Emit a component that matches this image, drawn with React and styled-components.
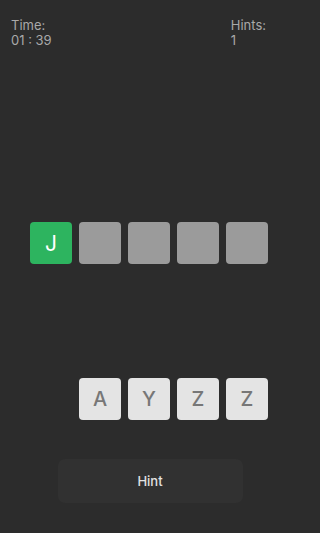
import React from "react";
import styled, { createGlobalStyle } from "styled-components";

const GlobalStyle = createGlobalStyle`
  html, body {
    margin: 0;
    padding: 0;
    background: #2c2c2c;
  }
  body {
    font-family: "Inter", "Liberation Sans", sans-serif;
  }
`;

const Screen = styled.div`
  width: 300px;
  height: 533px;
  background: #2c2c2c;
  display: flex;
  flex-direction: column;
  align-items: center;
  overflow: hidden;
`;

const Header = styled.div`
  align-self: stretch;
  display: flex;
  justify-content: space-between;
  padding: 18px 34px 0 11px;
`;

const Stat = styled.div`
  font-size: 13px;
  line-height: 15px;
  color: #a9a9a9;
`;

const TileRow = styled.div`
  width: 238px;
  display: flex;
  gap: 7px;
  justify-content: ${(p) => (p.$end ? "flex-end" : "flex-start")};
  margin-top: ${(p) => p.$top}px;
  margin-left: -2px;
`;

const Slot = styled.div`
  width: 42px;
  height: 42px;
  border-radius: 4px;
  background: ${(p) => (p.$filled ? "#2db45f" : "#9b9b9b")};
  color: #ffffff;
  display: flex;
  align-items: center;
  justify-content: center;
  font-size: 21px;
`;

const Key = styled.div`
  width: 42px;
  height: 42px;
  border-radius: 4px;
  background: #e4e4e4;
  color: #777777;
  display: flex;
  align-items: center;
  justify-content: center;
  font-size: 20px;
  font-weight: 500;
`;

const HintButton = styled.div`
  width: 185px;
  height: 44px;
  margin-top: 39px;
  border-radius: 7px;
  background: #313131;
  color: #e2e2e2;
  display: flex;
  align-items: center;
  justify-content: center;
  font-size: 13px;
  font-weight: 500;
`;

const slots = ["J", "", "", "", ""];
const keys = ["A", "Y", "Z", "Z"];

export default function App() {
  return (
    <Screen>
      <GlobalStyle />
      <Header>
        <Stat>
          Time:
          <br />
          01 : 39
        </Stat>
        <Stat>
          Hints:
          <br />1
        </Stat>
      </Header>
      <TileRow $top={174}>
        {slots.map((s, i) => (
          <Slot key={i} $filled={!!s}>
            {s}
          </Slot>
        ))}
      </TileRow>
      <TileRow $top={114} $end>
        {keys.map((k, i) => (
          <Key key={i}>{k}</Key>
        ))}
      </TileRow>
      <HintButton>Hint</HintButton>
    </Screen>
  );
}
